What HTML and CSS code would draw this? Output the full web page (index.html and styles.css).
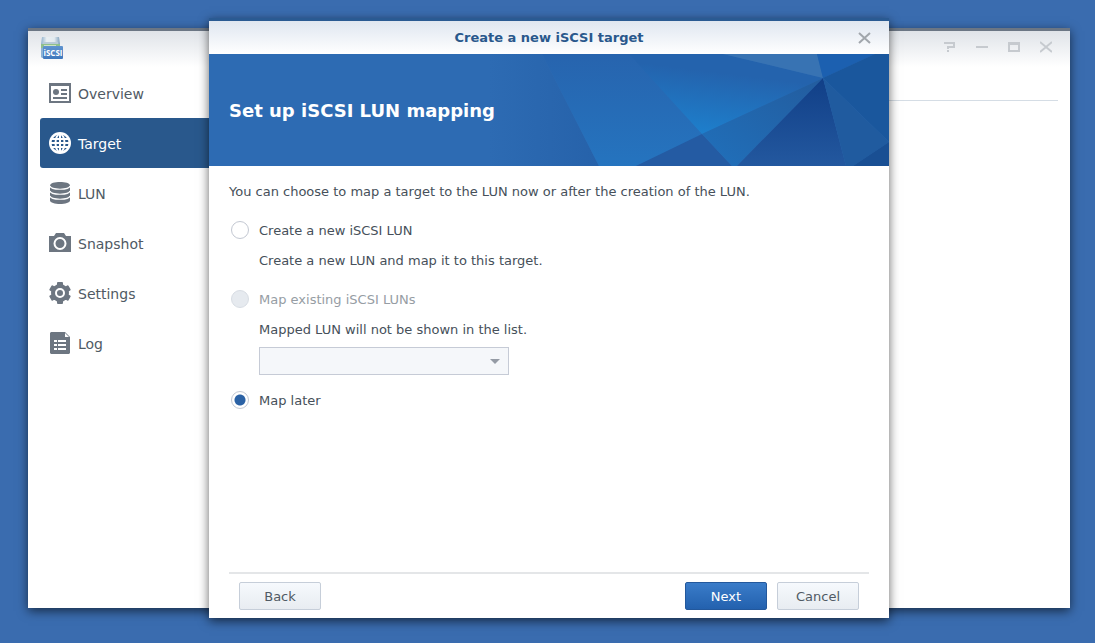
FILE: index.html
```html
<!DOCTYPE html>
<html lang="en">
<head>
  <meta charset="utf-8">
  <title>iSCSI Manager</title>
  <link rel="stylesheet" href="styles.css">
</head>
<body>
  <div class="window">
    <header class="window-bar">
      <!-- app icon -->
      <svg class="app-icon" width="24" height="24" viewBox="0 0 24 24">
        <defs>
          <linearGradient id="disk" x1="0" y1="0" x2="1" y2="0">
            <stop offset="0" stop-color="#8fb0cc"/>
            <stop offset="0.3" stop-color="#e9eff2"/>
            <stop offset="0.7" stop-color="#e2eaef"/>
            <stop offset="1" stop-color="#7ea0bd"/>
          </linearGradient>
          <linearGradient id="badge" x1="0" y1="0" x2="0" y2="1">
            <stop offset="0" stop-color="#5f93cf"/>
            <stop offset="1" stop-color="#3f78bd"/>
          </linearGradient>
        </defs>
        <path d="M2 1h17l1 7v3H1V8z" fill="url(#disk)"/>
        <path d="M3 6h15v2H3z" fill="#b9cbd8"/>
        <path d="M1 8h19v5H1z" fill="#8fbf8c"/>
        <path d="M4 9h12v2H4z" fill="#cfe3c0"/>
        <path d="M1 12h5v10H2l-1-1z" fill="#8db2d4"/>
        <rect x="3" y="10" width="20" height="13" rx="1" fill="url(#badge)"/>
        <text x="13" y="20" text-anchor="middle" class="app-icon-text">iSCSI</text>
      </svg>
      <div class="window-tools">
        <button type="button" aria-label="Help">
          <svg width="12" height="12" viewBox="0 0 12 12"><path d="M0 2h10v4H4v2M4 9v2"/></svg>
        </button>
        <button type="button" aria-label="Minimize">
          <svg width="12" height="12" viewBox="0 0 12 12"><path d="M0 6h12"/></svg>
        </button>
        <button type="button" aria-label="Maximize">
          <svg width="12" height="12" viewBox="0 0 12 12"><path d="M0 2h12M1 1v9h10V1M1 3h10"/></svg>
        </button>
        <button type="button" aria-label="Close">
          <svg width="12" height="12" viewBox="0 0 12 12"><path d="M0 1l12 10M12 1L0 11"/></svg>
        </button>
      </div>
    </header>

    <div class="window-body">
      <!-- side menu -->
      <nav class="menu">
        <a href="#overview">
          <svg width="24" height="24" viewBox="0 0 24 24">
            <path fill-rule="evenodd" d="M1 2h22v20H1zM3 5v15h18V5z"/>
            <circle cx="8" cy="11" r="3"/>
            <path d="M13 8h6v2h-6zM13 12h6v2h-6zM5 16h14v2H5z"/>
          </svg>
          <span>Overview</span>
        </a>
        <a href="#target" class="active">
          <svg width="24" height="24" viewBox="0 0 24 24">
            <circle cx="12" cy="12" r="11"/>
            <circle cx="12" cy="12" r="8.500" fill="#29588c"/>
            <g fill="none" stroke="#fff" stroke-width="2">
              <path d="M12 3v18M3 12h18M4 8h16M4 16h16"/>
              <ellipse cx="12" cy="12" rx="4.500" ry="9"/>
            </g>
          </svg>
          <span>Target</span>
        </a>
        <a href="#lun">
          <svg width="24" height="24" viewBox="0 0 24 24">
            <path d="M2 4.500v15c0 4.600 20 4.600 20 0v-15c0-4.600-20-4.600-20 0z"/>
            <path fill="none" stroke="#fff" stroke-width="1.200" d="M2 5c1 4.300 19 4.300 20 0M2 10c1 4.300 19 4.300 20 0M2 15c1 4.300 19 4.300 20 0"/>
          </svg>
          <span>LUN</span>
        </a>
        <a href="#snapshot">
          <svg width="24" height="24" viewBox="0 0 24 24">
            <path d="M1 5h5l2-3h8l2 3h5v16H1z"/>
            <circle cx="12" cy="12.500" r="5.500" stroke="#fff" stroke-width="2"/>
          </svg>
          <span>Snapshot</span>
        </a>
        <a href="#settings">
          <svg width="24" height="24" viewBox="0 0 24 24">
            <circle cx="12" cy="12" r="9"/>
            <rect x="9" y="1" width="6" height="22" rx="1"/>
            <rect x="9" y="1" width="6" height="22" rx="1" transform="rotate(60 12 12)"/>
            <rect x="9" y="1" width="6" height="22" rx="1" transform="rotate(120 12 12)"/>
            <circle cx="12" cy="12" r="4" stroke="#fff" stroke-width="2"/>
          </svg>
          <span>Settings</span>
        </a>
        <a href="#log">
          <svg width="24" height="24" viewBox="0 0 24 24">
            <path d="M3 1h14l5 5v16l-1 1H3l-1-1V2z"/>
            <path fill="#fff" d="M17 2l4 4h-4zM6 9h3v2H6zM10 9h8v2h-8zM6 13h3v2H6zM10 13h8v2h-8zM6 17h3v2H6zM10 17h8v2h-8z"/>
          </svg>
          <span>Log</span>
        </a>
      </nav>
      <main class="content"></main>
    </div>

    <!-- wizard -->
    <form class="dialog" role="dialog" aria-labelledby="dialog-title">
      <header class="dialog-bar">
        <h1 id="dialog-title">Create a new iSCSI target</h1>
        <button type="button" class="dialog-close" aria-label="Close">
          <svg width="14" height="12" viewBox="0 0 14 12"><path d="M1 1l11 10M12 1L1 11"/></svg>
        </button>
      </header>

      <div class="banner">
        <svg class="banner-art" viewBox="0 0 680 112" preserveAspectRatio="xMaxYMid slice">
          <defs>
            <linearGradient id="b1" x1="0" y1="0" x2="0" y2="1">
              <stop offset="0" stop-color="#2764ae"/>
              <stop offset="1" stop-color="#2574bf"/>
            </linearGradient>
            <linearGradient id="b2" x1="0.600" y1="0" x2="0.300" y2="1">
              <stop offset="0.250" stop-color="#2463ad"/>
              <stop offset="1" stop-color="#1d80cd"/>
            </linearGradient>
            <linearGradient id="b3" x1="0" y1="1" x2="1" y2="0">
              <stop offset="0" stop-color="#2070bb"/>
              <stop offset="1" stop-color="#235c9e"/>
            </linearGradient>
            <linearGradient id="b4" x1="0" y1="0" x2="0" y2="1">
              <stop offset="0" stop-color="#113f87"/>
              <stop offset="1" stop-color="#23589f"/>
            </linearGradient>
            <linearGradient id="b5" x1="0" y1="0" x2="1" y2="0">
              <stop offset="0" stop-color="#2d6bb3"/>
              <stop offset="1" stop-color="#2662aa"/>
            </linearGradient>
          </defs>
          <path fill="url(#b5)" d="M280 0h53l57 112H280z"/>
          <path fill="url(#b1)" d="M333 0h181l100 24-187 88h-37z"/>
          <path fill="url(#b2)" d="M420 0h94l100 24-121 56z"/>
          <path fill="#3873b3" d="M514 0h94l6 24z"/>
          <path fill="#1c60b0" d="M608 0h58l-52 24z"/>
          <path fill="#1a579d" d="M666 0h14v88l-66-64z"/>
          <path fill="#245ba3" d="M427 112l66-32 30 32z"/>
          <path fill="url(#b3)" d="M493 80l121-56-86 88h-5z"/>
          <path fill="url(#b4)" d="M614 24l23 88H528z"/>
          <path fill="#205b9f" d="M614 24l66 64-36 24h-7z"/>
          <path fill="#194f93" d="M680 88v24h-36z"/>
        </svg>
        <h2>Set up iSCSI LUN mapping</h2>
      </div>

      <div class="dialog-content">
        <p>You can choose to map a target to the LUN now or after the creation of the LUN.</p>

        <div class="option">
          <input type="radio" name="mapping" id="map-new">
          <label for="map-new">Create a new iSCSI LUN</label>
        </div>
        <p class="note">Create a new LUN and map it to this target.</p>

        <div class="option disabled">
          <input type="radio" name="mapping" id="map-existing" disabled>
          <label for="map-existing">Map existing iSCSI LUNs</label>
        </div>
        <p class="note" id="lun-note">Mapped LUN will not be shown in the list.</p>
        <div class="select">
          <select aria-labelledby="lun-note" disabled></select>
        </div>

        <div class="option">
          <input type="radio" name="mapping" id="map-later" checked>
          <label for="map-later">Map later</label>
        </div>
      </div>

      <footer class="dialog-footer">
        <button type="button" class="btn">Back</button>
        <button type="button" class="btn btn-primary">Next</button>
        <button type="button" class="btn">Cancel</button>
      </footer>
    </form>
  </div>
</body>
</html>
```
FILE: styles.css
```css
* {
  box-sizing: border-box;
}

body {
  margin: 0;
  min-height: 100vh;
  padding: 28px 25px 35px 28px;
  display: flex;
  background-color: #3a6caf;
  color: #46505a;
  font-family: Verdana, "DejaVu Sans", sans-serif;
  font-size: 13px;
  line-height: 20px;
}

h1, h2, p {
  margin: 0;
}

button {
  font-family: inherit;
  cursor: pointer;
}

svg {
  display: block;
}

/* main window */
.window {
  position: relative;
  flex: 1;
  display: flex;
  flex-direction: column;
  border-top: 3px solid #6b7684;
  background: linear-gradient(#dfe3e8, #fff 36px);
  box-shadow: 0 3px 10px rgba(0, 0, 0, 0.6);
}

.window-bar {
  display: flex;
  justify-content: space-between;
  height: 37px;
  padding: 5px 12px 0;
}

.app-icon-text {
  font-family: "Open Sans", sans-serif;
  font-size: 8px;
  font-weight: bold;
  fill: #fff;
}

.window-tools {
  display: flex;
}

.window-tools button {
  width: 32px;
  height: 22px;
  padding: 0 10px;
  border: none;
  background: none;
}

.window-tools button:last-child {
  margin-right: -4px;
}

.window-tools path {
  fill: none;
  stroke: #c6cacf;
  stroke-width: 2;
}

.window-body {
  flex: 1;
  display: flex;
  padding: 0 12px;
}

.menu {
  width: 200px;
}

.menu a {
  display: flex;
  align-items: center;
  gap: 6px;
  height: 50px;
  padding: 0 8px;
  border-radius: 3px;
  color: #505a64;
  font-size: 14px;
  text-decoration: none;
}

.menu span {
  padding-top: 2px;
}

.menu svg {
  fill: #6d7681;
}

.menu .active {
  background-color: #29588c;
  color: #fff;
}

.menu .active svg {
  fill: #fff;
}

.content {
  flex: 1;
  height: 33px;
  border-bottom: 1px solid #d5dde5;
}

/* wizard dialog */
.dialog {
  position: absolute;
  top: -13px;
  bottom: -10px;
  left: 0;
  right: 0;
  width: 680px;
  max-width: 100%;
  margin: 0 auto;
  display: flex;
  flex-direction: column;
  border-top: 3px solid #2a5a92;
  background-color: #fff;
  box-shadow: 0 3px 10px rgba(0, 0, 0, 0.6);
}

.dialog-bar {
  display: flex;
  align-items: center;
  height: 33px;
  padding: 0 17px;
  background: linear-gradient(#dfe6f0, #fff);
}

.dialog-bar h1 {
  flex: 1;
  padding-left: 14px;
  color: #29588c;
  font-size: 13px;
  text-align: center;
}

.dialog-close {
  padding: 0;
  border: none;
  background: none;
}

.dialog-close path {
  fill: none;
  stroke: #a1a6ac;
  stroke-width: 2;
}

.banner {
  position: relative;
  display: flex;
  align-items: center;
  height: 112px;
  padding: 2px 20px 0;
  background-color: #2d6bb3;
}

.banner-art {
  position: absolute;
  top: 0;
  left: 0;
  width: 100%;
  height: 100%;
}

.banner h2 {
  position: relative;
  color: #fff;
  font-size: 18px;
}

.dialog-content {
  flex: 1;
  padding: 16px 20px;
}

.option {
  display: flex;
  align-items: center;
  gap: 10px;
  height: 20px;
  margin-top: 19px;
  padding-left: 2px;
}

.option input {
  appearance: none;
  width: 18px;
  height: 18px;
  margin: 0 0 2px;
  border: 1px solid #c3c8d2;
  border-radius: 50%;
  background-color: #fff;
}

.option input:checked {
  background-image: radial-gradient(circle, #2b62a5 5px, #fff 6px);
}

.option input:disabled {
  border-color: #d8dde4;
  background-color: #e6eaef;
}

.disabled {
  color: #969da4;
}

.note {
  margin-top: 10px;
  padding-left: 30px;
}

.select {
  position: relative;
  width: 250px;
  margin: 7px 0 0 30px;
}

.select select {
  appearance: none;
  display: block;
  width: 100%;
  height: 28px;
  border: 1px solid #c6cbd6;
  border-radius: 0;
  background-color: #f5f7fa;
  opacity: 1;
}

.select::after {
  content: "";
  position: absolute;
  top: 12px;
  right: 9px;
  border: 5px solid transparent;
  border-top-color: #959ba5;
  border-bottom: none;
}

.select + .option {
  margin-top: 16px;
}

.dialog-footer {
  display: flex;
  gap: 10px;
  margin: 0 20px;
  padding: 8px 10px;
  border-top: 2px solid #e4e6e8;
}

.btn {
  width: 82px;
  height: 28px;
  padding: 0;
  border: 1px solid #c6ced9;
  border-radius: 2px;
  background: linear-gradient(#f6f9fd, #e8ecf1);
  color: #505a64;
  font-size: 13px;
}

.btn:first-child {
  margin-right: auto;
}

.btn-primary {
  border-color: #23589c;
  background: linear-gradient(#3a7cc9, #2361ae);
  color: #fff;
}
```
